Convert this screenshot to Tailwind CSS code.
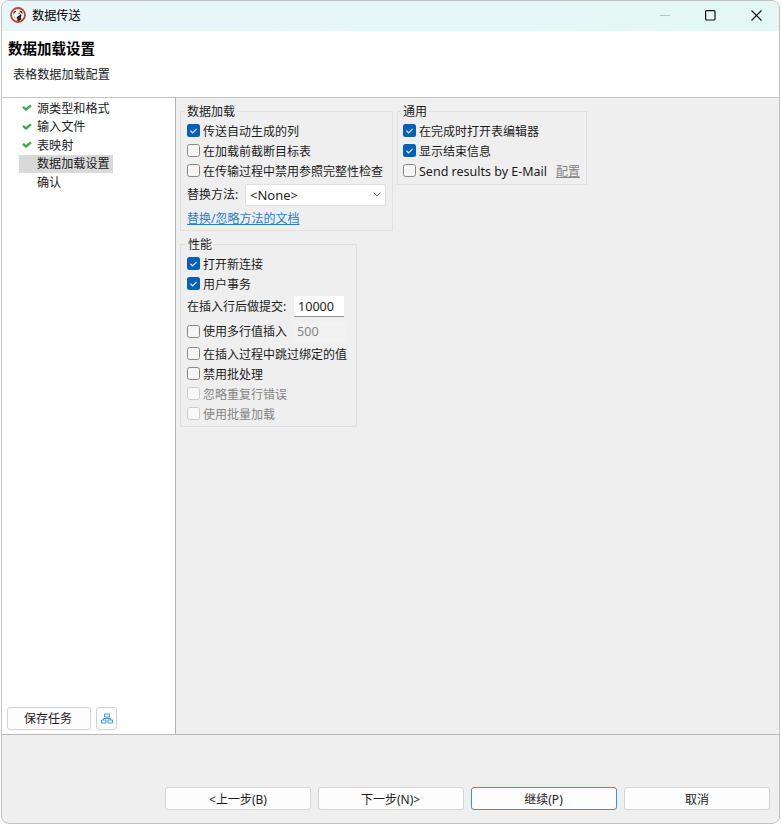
<!DOCTYPE html>
<html lang="zh-CN">
<head>
<meta charset="utf-8">
<title>数据传送</title>
<script src="https://cdn.jsdelivr.net/npm/@tailwindcss/browser@4"></script>
</head>
<body class="w-[781px] h-[825px] overflow-hidden bg-white pl-px text-[12px] leading-[20px] text-[#1c1c1c] whitespace-nowrap font-['Noto_Sans','Noto_Sans_CJK_SC',sans-serif]">
<svg class="hidden">
  <symbol id="tick" viewBox="0 0 13 13"><rect width="13" height="13" rx="2.5" fill="#0560b6"/><path d="M3.400 6.700l2.200 2.100 4-4" fill="none" stroke="#d9ecfb" stroke-width="1.2"/></symbol>
  <symbol id="box" viewBox="0 0 13 13"><rect x=".5" y=".5" width="12" height="12" rx="2.2" fill="#f5f5f5" stroke="#878787"/></symbol>
  <symbol id="boxoff" viewBox="0 0 13 13"><rect x=".5" y=".5" width="12" height="12" rx="2.2" fill="#f8f8f8" stroke="#cdcdcd"/></symbol>
  <symbol id="done" viewBox="0 0 10 8"><path d="M1 2.800l3 2.600 5-4" fill="none" stroke="#43a543" stroke-width="2.3"/></symbol>
</svg>
<div class="w-[779px] h-[824px] border border-[#bfc3c4] rounded-[8px] overflow-hidden flex flex-col bg-[#efefef]">
  <header class="h-[30px] shrink-0 bg-gradient-to-r from-[#e9f6f9] to-[#e3f8f5] flex items-center pl-[8px] pb-[2px] text-black">
    <svg class="w-4 h-4 mr-[6px]" viewBox="0 0 16 16"><circle cx="8" cy="8" r="7" fill="#fff" stroke="#b9462f" stroke-width="1.8"/><path d="M3.300 5.200l2-1.700 1 .9-1.500 1.200-1 2zM9 3.300l2.800 1 1.200 2.500-2-.8zM7.200 9.500l2-1 1.700-1.400.7 1.600-.8 1.500.8 2-2.400 1.600-2.200.2.500-2-1-.8z" fill="#32211f"/><circle cx="9.200" cy="6.200" r=".7" fill="#5b403b"/><path d="M4 9l1.200 2.500" stroke="#a98379" stroke-width=".7"/></svg>
    <span class="text-[12.2px] pt-px">数据传送</span>
    <div class="ml-auto flex items-center pr-[17px]">
      <svg class="w-[10px] h-[11px] mr-[35px]" viewBox="0 0 10 11"><path d="M0 5.500h10" stroke="#b5c4c3"/></svg>
      <svg class="w-[11px] h-[11px] mr-[35px]" viewBox="0 0 11 11"><rect x=".6" y=".6" width="9.400" height="9.400" rx="1" fill="none" stroke="#111" stroke-width="1.2"/></svg>
      <svg class="w-[11px] h-[11px]" viewBox="0 0 11 11"><path d="M.5.5l10 10M10.500.5l-10 10" stroke="#111" stroke-width="1.1"/></svg>
    </div>
  </header>
  <section class="h-[67px] shrink-0 bg-white border-b border-[#c4c4c4] pt-[6px]">
    <h1 class="pl-[6px] text-[14.5px] font-bold leading-[22px] text-black">数据加载设置</h1>
    <p class="pl-[11px] pt-[6px] text-[12.1px]">表格数据加载配置</p>
  </section>
  <div class="h-[637px] shrink-0 flex border-b border-[#b9b9b9]">
    <aside class="w-[174px] shrink-0 bg-white border-r border-[#b3b3b3] flex flex-col">
      <ul class="pl-[17px] pt-px text-[12.1px] leading-[18.5px]">
        <li class="h-[18.5px] flex items-center"><svg class="w-[10px] h-2 ml-[3px] mr-[5px]"><use href="#done"/></svg><span class="pt-px">源类型和格式</span></li>
        <li class="h-[18.5px] flex items-center"><svg class="w-[10px] h-2 ml-[3px] mr-[5px]"><use href="#done"/></svg><span class="pt-px">输入文件</span></li>
        <li class="h-[18.5px] flex items-center"><svg class="w-[10px] h-2 ml-[3px] mr-[5px]"><use href="#done"/></svg><span class="pt-px">表映射</span></li>
        <li class="h-[18.5px] flex items-center bg-[#d9d9d9] w-[94px] pl-[18px]">数据加载设置</li>
        <li class="h-[18.5px] flex items-center pl-[18px]"><span class="pt-px">确认</span></li>
      </ul>
      <div class="mt-auto flex gap-[5px] pl-[5px] pb-[4px]">
        <button class="w-[84px] h-[23px] leading-[20px] rounded-[3px] border border-[#d2d2d2] bg-[#fdfdfd] pr-[2px]">保存任务</button>
        <button class="w-[21px] h-[23px] rounded-[3px] border border-[#d2d2d2] bg-[#fdfdfd] flex items-center justify-center">
          <svg class="w-[12px] h-[11px]" viewBox="0 0 12 11" fill="none" stroke="#3d9bdb"><path d="M3.500 1h5v3h-5zM.5 7h4.500v3h-4.500zM7 7h4.500v3H7zM6 4v1.500M2.500 7V5.500h7V7"/></svg>
        </button>
      </div>
    </aside>
    <main class="pl-[4px] pt-[13px]">
      <div class="flex items-start gap-[4px]">
        <section class="w-[213px] h-[120px] border border-[#e0e0e0] pl-[6px]">
          <h2 class="-mt-[11px] -ml-[2px] pl-[2px] pt-px w-[52px] h-[20px] bg-[#efefef]">数据加载</h2>
          <label class="h-5 flex items-center gap-[3px]"><svg class="w-[13px] h-[13px] mb-px"><use href="#tick"/></svg><span class="pt-px">传送自动生成的列</span></label>
          <label class="h-5 flex items-center gap-[3px]"><svg class="w-[13px] h-[13px] mb-px"><use href="#box"/></svg><span class="pt-px">在加载前截断目标表</span></label>
          <label class="h-5 flex items-center gap-[3px]"><svg class="w-[13px] h-[13px] mb-px"><use href="#box"/></svg><span class="pt-px">在传输过程中禁用参照完整性检查</span></label>
          <div class="h-[27px] flex items-center">
            <span class="w-[58px] pt-px">替换方法:</span>
            <div class="w-[141px] h-[22px] bg-white border border-[#dedede] rounded-[2px] flex items-center pl-[4px] pr-[4px] text-[13px]">&lt;None&gt;<svg class="ml-auto w-[8px] h-[5px]" viewBox="0 0 8 5"><path d="M.5.5L4 4 7.500.5" fill="none" stroke="#777"/></svg></div>
          </div>
          <a class="block text-[#2a7ecb] underline underline-offset-1 h-5 pt-px">替换/忽略方法的文档</a>
        </section>
        <section class="w-[190px] h-[74px] border border-[#e0e0e0] pl-[5px]">
          <h2 class="-mt-[11px] -ml-[2px] pl-[2px] pt-px w-[28px] h-[20px] bg-[#efefef]">通用</h2>
          <label class="h-5 flex items-center gap-[3px]"><svg class="w-[13px] h-[13px] mb-px"><use href="#tick"/></svg><span class="pt-px">在完成时打开表编辑器</span></label>
          <label class="h-5 flex items-center gap-[3px]"><svg class="w-[13px] h-[13px] mb-px"><use href="#tick"/></svg><span class="pt-px">显示结束信息</span></label>
          <label class="h-5 flex items-center gap-[3px]"><svg class="w-[13px] h-[13px] mb-px"><use href="#box"/></svg><span class="w-[134px] text-[12.5px] pt-px">Send results by E-Mail</span><a class="text-[#858585] underline underline-offset-1 pt-px">配置</a></label>
        </section>
      </div>
      <section class="mt-[13px] w-[177px] h-[183px] border border-[#e0e0e0] pl-[6px]">
        <h2 class="-mt-[11px] -ml-[2px] pl-[3px] pt-px w-[28px] h-[20px] bg-[#efefef]">性能</h2>
        <label class="h-5 flex items-center gap-[3px]"><svg class="w-[13px] h-[13px] mb-px"><use href="#tick"/></svg><span class="pt-px">打开新连接</span></label>
        <label class="h-5 flex items-center gap-[3px]"><svg class="w-[13px] h-[13px] mb-px"><use href="#tick"/></svg><span class="pt-px">用户事务</span></label>
        <div class="h-[25px] flex items-center"><span class="w-[107px] pt-px">在插入行后做提交:</span><div class="w-[50px] h-[21px] leading-[21px] bg-white border-b border-[#999] pl-[4px] text-[12.6px]">10000</div></div>
        <label class="h-[25px] flex items-center gap-[3px]"><svg class="w-[13px] h-[13px] mb-px"><use href="#box"/></svg>使用多行值插入<span class="ml-[3px] w-[54px] h-[20px] pl-[4px] bg-[#f1f1f1] text-[12.6px] text-[#858585]">500</span></label>
        <label class="h-5 flex items-center gap-[3px]"><svg class="w-[13px] h-[13px] mb-px"><use href="#box"/></svg><span class="pt-px">在插入过程中跳过绑定的值</span></label>
        <label class="h-5 flex items-center gap-[3px]"><svg class="w-[13px] h-[13px] mb-px"><use href="#box"/></svg><span class="pt-px">禁用批处理</span></label>
        <label class="h-5 flex items-center gap-[3px] text-[#858585]"><svg class="w-[13px] h-[13px] mb-px"><use href="#boxoff"/></svg><span class="pt-px">忽略重复行错误</span></label>
        <label class="h-5 flex items-center gap-[3px] text-[#858585]"><svg class="w-[13px] h-[13px] mb-px"><use href="#boxoff"/></svg><span class="pt-px">使用批量加载</span></label>
      </section>
    </main>
  </div>
  <footer class="flex gap-[7px] pt-[52px] pl-[163px]">
    <button class="w-[146px] h-[23px] leading-[21px] rounded-[3px] border border-[#d4d4d4] bg-[#fdfdfd] pt-px">&lt;上一步(B)</button>
    <button class="w-[146px] h-[23px] leading-[21px] rounded-[3px] border border-[#d4d4d4] bg-[#fdfdfd] pt-px pr-px">下一步(N)&gt;</button>
    <button class="w-[146px] h-[23px] leading-[21px] rounded-[3px] border border-[#4390d3] bg-[#fdfdfd] pt-px pr-px">继续(P)</button>
    <button class="w-[146px] h-[23px] leading-[21px] rounded-[3px] border border-[#d4d4d4] bg-[#fdfdfd] pt-px">取消</button>
  </footer>
</div>
</body>
</html>
